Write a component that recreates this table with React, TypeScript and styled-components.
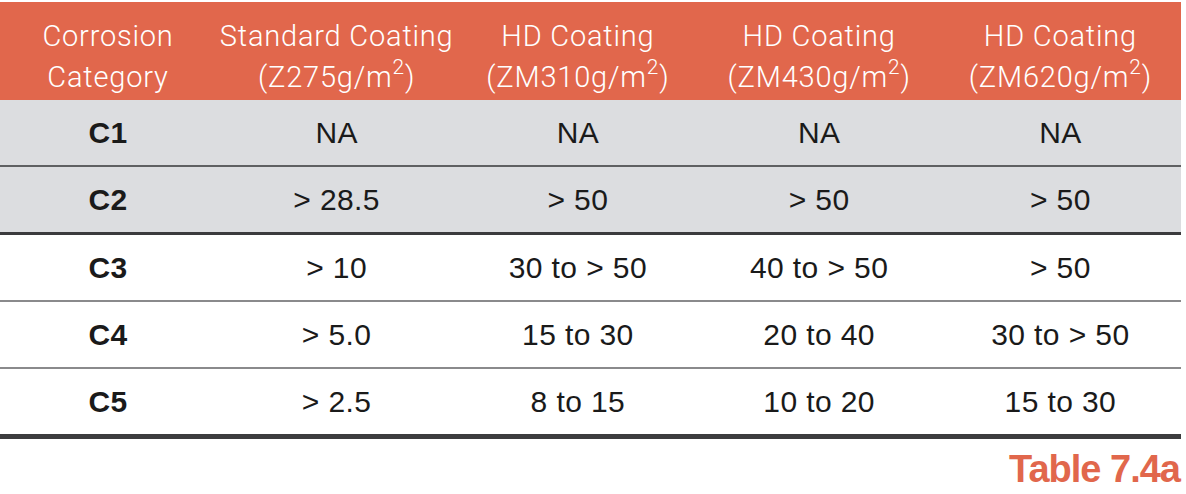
import React from "react";
import styled, { createGlobalStyle } from "styled-components";

const Global = createGlobalStyle`
  html, body { margin: 0; padding: 0; background: #ffffff; }
  body { font-family: "Liberation Sans", Arial, sans-serif; }
`;

const Page = styled.div`
  width: 1181px;
  padding-top: 2px;
`;

const Grid = styled.div`
  display: grid;
  grid-template-columns: 216px repeat(4, 1fr);
`;

const HeaderRow = styled(Grid)`
  background: #e1674c;
  height: 98px;
`;

const HeadCell = styled.div`
  box-sizing: border-box;
  padding-top: 14px;
  text-align: center;
  color: #ffffff;
  font-family: Roboto, "Liberation Sans", sans-serif;
  font-weight: 300;
  font-size: 29px;
  line-height: 41px;
  letter-spacing: 0.8px;
  white-space: nowrap;
`;

const Line = styled.div`
  display: block;
`;

const Sup = styled.sup`
  font-size: 0.72em;
  vertical-align: 0.6em;
  line-height: 0;
`;

const BodyRow = styled(Grid)<{ $shade: boolean; $border: string }>`
  background: ${(p) => (p.$shade ? "#dcdde0" : "#ffffff")};
  height: 65px;
  border-bottom: ${(p) => p.$border};
  box-sizing: content-box;
`;

const Cell = styled.div<{ $bold?: boolean }>`
  display: flex;
  align-items: center;
  justify-content: center;
  font-family: "Liberation Sans", Arial, sans-serif;
  font-size: 30px;
  letter-spacing: 0.4px;
  font-weight: ${(p) => (p.$bold ? 700 : 400)};
  color: #1a1a1a;
  white-space: nowrap;
`;

const Caption = styled.div`
  margin-top: 9px;
  text-align: right;
  font-family: "Liberation Sans", Arial, sans-serif;
  font-weight: 700;
  font-size: 38px;
  line-height: 42px;
  letter-spacing: -1px;
  color: #e1674c;
  padding-right: 1px;
`;

const headers: [string, string][] = [
  ["Corrosion", "Category"],
  ["Standard Coating", "(Z275g/m"],
  ["HD Coating", "(ZM310g/m"],
  ["HD Coating", "(ZM430g/m"],
  ["HD Coating", "(ZM620g/m"],
];

const rows: { label: string; values: string[]; shade: boolean; border: string }[] = [
  { label: "C1", values: ["NA", "NA", "NA", "NA"], shade: true, border: "2px solid #5f6062" },
  { label: "C2", values: ["> 28.5", "> 50", "> 50", "> 50"], shade: true, border: "3px solid #3b3b3d" },
  { label: "C3", values: ["> 10", "30 to > 50", "40 to > 50", "> 50"], shade: false, border: "2px solid #8a8a8c" },
  { label: "C4", values: ["> 5.0", "15 to 30", "20 to 40", "30 to > 50"], shade: false, border: "2px solid #8a8a8c" },
  { label: "C5", values: ["> 2.5", "8 to 15", "10 to 20", "15 to 30"], shade: false, border: "5px solid #3c3c3e" },
];

export default function App() {
  return (
    <>
      <Global />
      <Page>
        <HeaderRow>
          {headers.map(([a, b], i) => (
            <HeadCell key={i}>
              <Line>{a}</Line>
              <Line>
                {b}
                {i > 0 && (
                  <>
                    <Sup>2</Sup>)
                  </>
                )}
              </Line>
            </HeadCell>
          ))}
        </HeaderRow>
        {rows.map((r) => (
          <BodyRow key={r.label} $shade={r.shade} $border={r.border}>
            <Cell $bold>{r.label}</Cell>
            {r.values.map((v, j) => (
              <Cell key={j}>{v}</Cell>
            ))}
          </BodyRow>
        ))}
        <Caption>Table 7.4a</Caption>
      </Page>
    </>
  );
}
